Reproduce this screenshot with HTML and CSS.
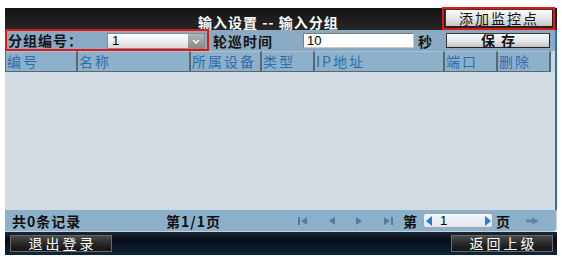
FILE: index.html
```html
<!DOCTYPE html>
<html lang="zh-CN">
<head>
<meta charset="utf-8">
<title>输入分组</title>
<link rel="stylesheet" href="styles.css">
</head>
<body>
<div class="panel">
  <div class="titlebar">
    <span class="title">输入设置 -- 输入分组</span>
    <span class="hl add-wrap"><span class="btn light add">添加监控点</span></span>
  </div>
  <div class="toolbar">
    <div class="hl group">
      <span class="lbl glabel">分组编号：</span>
      <span class="select"><span class="val">1</span><span class="arrow"><svg width="8" height="5" viewBox="0 0 8 5"><path d="M1 1 L4 4 L7 1" fill="none" stroke="#fff" stroke-width="1.4"/></svg></span></span>
    </div>
    <span class="lbl poll">轮巡时间</span>
    <span class="input">10</span>
    <span class="lbl sec">秒</span>
    <span class="btn light save">保存</span>
  </div>
  <div class="thead">
    <span class="th first">编号</span>
    <span class="th">名称</span>
    <span class="th">所属设备</span>
    <span class="th">类型</span>
    <span class="th">IP地址</span>
    <span class="th">端口</span>
    <span class="th">删除</span>
    <span class="th-rest"></span>
  </div>
  <div class="tbody"></div>
  <div class="tfoot">
    <span class="count">共0条记录</span>
    <span class="pages">第1/1页</span>
    <span class="nav nav1"><svg width="10" height="8" viewBox="0 0 10 8"><rect x="0" y="0" width="2" height="8" fill="#56799e"/><path d="M9 0 L3 4 L9 8 Z" fill="#56799e"/></svg></span>
    <span class="nav nav2"><svg width="7" height="8" viewBox="0 0 7 8"><path d="M7 0 L1 4 L7 8 Z" fill="#56799e"/></svg></span>
    <span class="nav nav3"><svg width="7" height="8" viewBox="0 0 7 8"><path d="M0 0 L6 4 L0 8 Z" fill="#56799e"/></svg></span>
    <span class="nav nav4"><svg width="10" height="8" viewBox="0 0 10 8"><path d="M0 0 L6 4 L0 8 Z" fill="#56799e"/><rect x="7" y="0" width="2" height="8" fill="#56799e"/></svg></span>
    <span class="lbl2">第</span>
    <span class="pager">
      <svg class="tri" width="6" height="10" viewBox="0 0 6 10"><path d="M6 0 L0 5 L6 10 Z" fill="#1f7fe0"/></svg>
      <span class="pval">1</span>
      <svg class="tri" width="6" height="10" viewBox="0 0 6 10"><path d="M0 0 L6 5 L0 10 Z" fill="#1f7fe0"/></svg>
    </span>
    <span class="lbl2 ye">页</span>
    <span class="go"><svg width="13" height="8" viewBox="0 0 13 8"><rect x="0" y="2.5" width="7" height="3" fill="#5f84aa"/><path d="M6 0 L13 4 L6 8 Z" fill="#5f84aa"/></svg></span>
  </div>
  <div class="bottombar">
    <span class="btn dark logout">退出登录</span>
    <span class="btn dark back">返回上级</span>
  </div>
</div>
</body>
</html>
```
FILE: styles.css
```css
html, body {
  margin: 0;
  padding: 0;
  background: #ffffff;
}
body {
  font-family: "Noto Sans CJK SC", "Liberation Sans", sans-serif;
  font-size: 14px;
  color: #111;
}
.panel {
  margin: 8px 0 0 5px;
  width: 552px;
  height: 247px;
  display: flex;
  flex-direction: column;
}
.titlebar {
  height: 22px;
  flex: none;
  display: flex;
  align-items: flex-start;
  background: linear-gradient(#141414, #262626);
}
.title {
  margin-left: 193px;
  margin-top: 6px;
  color: #fff;
  font-size: 14px;
  font-weight: bold;
  line-height: 16px;
  letter-spacing: 1px;
}
.hl {
  border: 2px solid #e31515;
  box-sizing: border-box;
}
.add-wrap {
  margin-left: auto;
  margin-right: 2px;
  margin-top: -1px;
  width: 113px;
  height: 23px;
  display: flex;
  align-items: flex-start;
}
.btn {
  display: flex;
  align-items: center;
  justify-content: center;
  box-sizing: border-box;
  font-size: 14px;
  letter-spacing: 2px;
  white-space: nowrap;
}
.btn.light {
  background: linear-gradient(#fbfbfb, #e2e2e2 60%, #c4c4c4);
  border: 1px solid #3a3a3a;
  border-right-color: #222;
  border-bottom-color: #222;
  color: #111;
}
.add {
  width: 108px;
  height: 18px;
  margin-left: 1px;
  line-height: 16px;
}
.toolbar {
  height: 21px;
  flex: none;
  display: flex;
  align-items: center;
  background: #8aaac3;
  border-right: 2px solid #2f6fb4;
  box-sizing: border-box;
}
.group {
  width: 204px;
  height: 22px;
  margin-top: -1px;
  display: flex;
  align-items: center;
  align-self: flex-start;
}
.lbl {
  font-weight: bold;
  color: #141414;
  letter-spacing: 2px;
  line-height: 16px;
  white-space: nowrap;
}
.glabel {
  width: 99px;
  padding-left: 1px;
  letter-spacing: 1px;
}
.select {
  width: 98px;
  height: 16px;
  box-sizing: border-box;
  display: flex;
  background: linear-gradient(#ffffff, #f0f0f0 50%, #d8d8d8);
  border: 1px solid #8a8a8a;
  margin-top: 2px;
}
.val {
  flex: 1;
  padding-left: 4px;
  font-family: "Liberation Sans", sans-serif;
  font-size: 13px;
  line-height: 14px;
  color: #000;
}
.arrow {
  width: 16px;
  display: flex;
  align-items: center;
  justify-content: center;
  background: linear-gradient(#b4b4b4, #8a8a8a);
}
.poll {
  margin-left: 4px;
  width: 64px;
  letter-spacing: 1px;
}
.input {
  margin-left: 26px;
  width: 111px;
  height: 15px;
  box-sizing: border-box;
  background: #fff;
  border: 1px solid #7a7a7a;
  border-right-color: #c8c8c8;
  border-bottom-color: #c8c8c8;
  padding-left: 3px;
  font-family: "Liberation Sans", sans-serif;
  font-size: 13px;
  line-height: 13px;
  color: #000;
}
.sec {
  margin-left: 4px;
  width: 16px;
}
.save {
  margin-left: 12px;
  width: 104px;
  height: 15px;
  font-weight: bold;
  letter-spacing: 6px;
  padding-left: 6px;
  line-height: 13px;
}
.thead {
  height: 21px;
  flex: none;
  display: grid;
  grid-template-columns: 73px 113px 71px 53px 130px 53px 53px 1fr;
  background: #8aaac3;
  border-right: 2px solid #2f6fb4;
  box-sizing: border-box;
}
.th {
  background: #8db1cb;
  border-right: 2px solid #5c6670;
  border-bottom: 1px solid #5c6670;
  border-top: 1px solid #a9c3d6;
  color: #2e6da8;
  padding-left: 1px;
  line-height: 18px;
  letter-spacing: 2px;
  white-space: nowrap;
  overflow: hidden;
}
.th.first {
  border-left: 1px solid #5c6670;
}
.th-rest {
  background: #c9d6e0;
}
.tbody {
  flex: 1;
  background: #d3dbe2;
  border-right: 2px solid #2f6fb4;
}
.tfoot {
  height: 22px;
  flex: none;
  display: flex;
  align-items: center;
  background: #8db0ca;
  border-bottom: 1px solid #c3d3de;
  border-right: 1px solid #c3d3de;
  border-bottom-right-radius: 4px;
  box-sizing: border-box;
  font-weight: bold;
}
.count {
  width: 161px;
  padding-left: 7px;
  box-sizing: border-box;
  letter-spacing: 1px;
  white-space: nowrap;
}
.pages {
  width: 132px;
  letter-spacing: 1px;
  white-space: nowrap;
}
.nav {
  display: flex;
  align-items: center;
}
.nav1 { width: 30px; }
.nav2 { width: 28px; }
.nav3 { width: 28px; }
.nav4 { width: 19px; }
.lbl2 {
  width: 16px;
  line-height: 16px;
}
.pager {
  margin-left: 4px;
  width: 70px;
  height: 15px;
  box-sizing: border-box;
  border: 1px solid #9aa8b4;
  border-radius: 3px;
  background: linear-gradient(#f4f6f8, #e2e8ed);
  display: flex;
  align-items: center;
  padding: 0 1px 0 2px;
}
.pval {
  flex: 1;
  padding-left: 8px;
  font-family: "Liberation Sans", sans-serif;
  font-size: 13px;
  font-weight: normal;
  line-height: 13px;
  color: #000;
}
.ye {
  margin-left: 3px;
}
.go {
  margin-left: 14px;
  display: flex;
  align-items: center;
}
.bottombar {
  height: 23px;
  flex: none;
  display: flex;
  align-items: center;
  justify-content: space-between;
  padding: 0 4px 0 5px;
  background: linear-gradient(#1c2833, #050d15 35%, #0a1b2a 75%, #10283c);
}
.btn.dark {
  width: 102px;
  height: 17px;
  background: linear-gradient(#4a4a4a, #262626 55%, #151515);
  border: 1px solid #6a6a6a;
  color: #fff;
  letter-spacing: 3px;
  padding-left: 3px;
  line-height: 15px;
}
.back {
  width: 104px;
}
```
